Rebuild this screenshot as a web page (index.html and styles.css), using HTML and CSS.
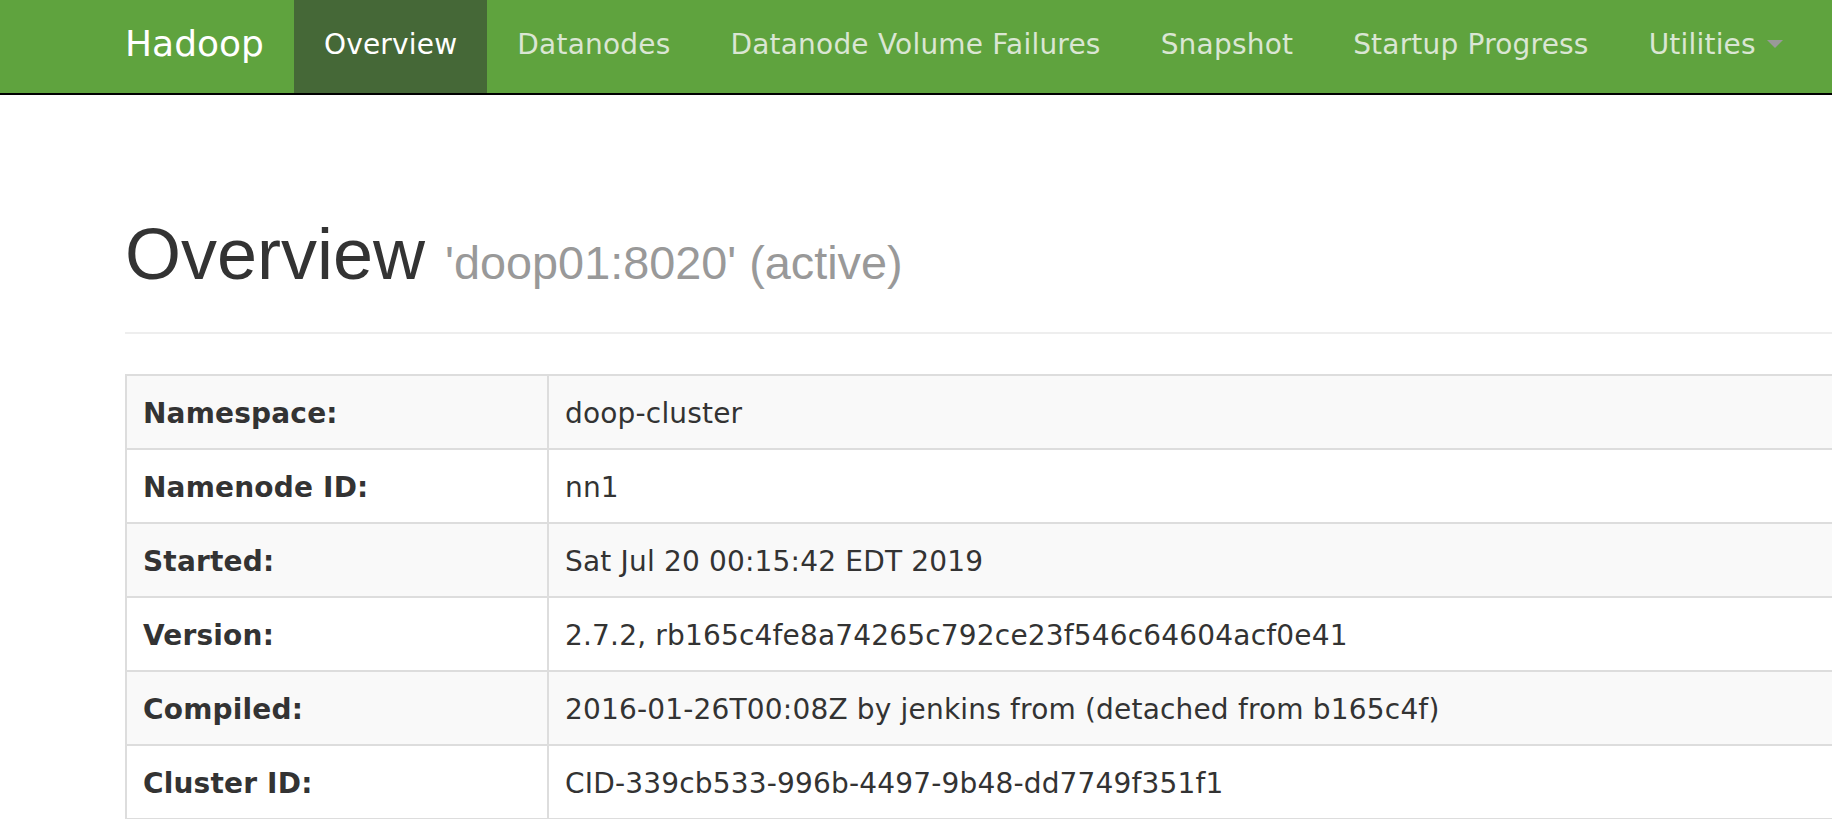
FILE: index.html
```html
<!DOCTYPE html>
<html>
<head>
<meta charset="utf-8">
<title>Namenode information</title>
<link rel="stylesheet" href="styles.css">
</head>
<body>
<header class="navbar">
  <div class="nav-inner">
    <a class="brand" href="#">Hadoop</a>
    <ul class="nav">
      <li class="active"><a href="#">Overview</a></li>
      <li><a href="#">Datanodes</a></li>
      <li><a href="#">Datanode Volume Failures</a></li>
      <li><a href="#">Snapshot</a></li>
      <li><a href="#">Startup Progress</a></li>
      <li><a href="#">Utilities <span class="caret"></span></a></li>
    </ul>
  </div>
</header>
<main class="container">
  <div class="page-header">
    <h1>Overview <small>'doop01:8020' (active)</small></h1>
  </div>
  <table class="info">
    <tbody>
      <tr><th>Namespace:</th><td>doop-cluster</td></tr>
      <tr><th>Namenode ID:</th><td>nn1</td></tr>
      <tr><th>Started:</th><td>Sat Jul 20 00:15:42 EDT 2019</td></tr>
      <tr><th>Version:</th><td>2.7.2, rb165c4fe8a74265c792ce23f546c64604acf0e41</td></tr>
      <tr><th>Compiled:</th><td>2016-01-26T00:08Z by jenkins from (detached from b165c4f)</td></tr>
      <tr><th>Cluster ID:</th><td>CID-339cb533-996b-4497-9b48-dd7749f351f1</td></tr>
    </tbody>
  </table>
</main>
</body>
</html>
```
FILE: styles.css
```css
html, body {
  margin: 0;
  padding: 0;
  overflow: hidden;
  background: #fff;
}
body {
  font-family: "DejaVu Sans", sans-serif;
  font-size: 28px;
  color: #333;
}
.navbar {
  background: #5fa33e;
  border-bottom: 2px solid #000;
  height: 93px;
}
.nav-inner {
  display: flex;
  padding-left: 95px;
  height: 93px;
}
.brand {
  display: block;
  font-size: 36px;
  line-height: 40px;
  padding: 24px 30px 29px 30px;
  color: #fff;
  text-decoration: none;
}
.nav {
  display: flex;
  list-style: none;
  margin: 0;
  padding: 0;
}
.nav li a {
  display: block;
  font-size: 28px;
  line-height: 40px;
  letter-spacing: 0.2px;
  padding: 25px 30px 28px 30px;
  color: #dae6d3;
  text-decoration: none;
  white-space: nowrap;
}
.nav li.active a {
  background: #456837;
  color: #fff;
}
.caret {
  display: inline-block;
  width: 0;
  height: 0;
  margin-left: 2px;
  vertical-align: middle;
  border-top: 8px solid #999;
  border-left: 8px solid transparent;
  border-right: 8px solid transparent;
  position: relative;
  top: -2px;
}
.container {
  margin-left: 125px;
  width: 1800px;
  padding-top: 120px;
}
.page-header {
  padding-bottom: 18px;
  border-bottom: 2px solid #eee;
  margin-bottom: 40px;
}
h1 {
  margin: 0 0 20px 0;
  font-family: "Liberation Sans", Arial, sans-serif;
  font-size: 72px;
  font-weight: 500;
  line-height: 79px;
  color: #333;
}
h1 small {
  font-size: 46.8px;
  font-weight: normal;
  line-height: 1;
  color: #999;
}
.info {
  width: 100%;
  border-collapse: collapse;
  border: 2px solid #ddd;
}
.info th, .info td {
  border: 2px solid #ddd;
  padding: 18px 16px 14px 16px;
  line-height: 40px;
  letter-spacing: 0.18px;
  text-align: left;
  vertical-align: top;
}
.info th {
  width: 388px;
  font-weight: bold;
}
.info tr:nth-child(odd) {
  background: #f9f9f9;
}
```
